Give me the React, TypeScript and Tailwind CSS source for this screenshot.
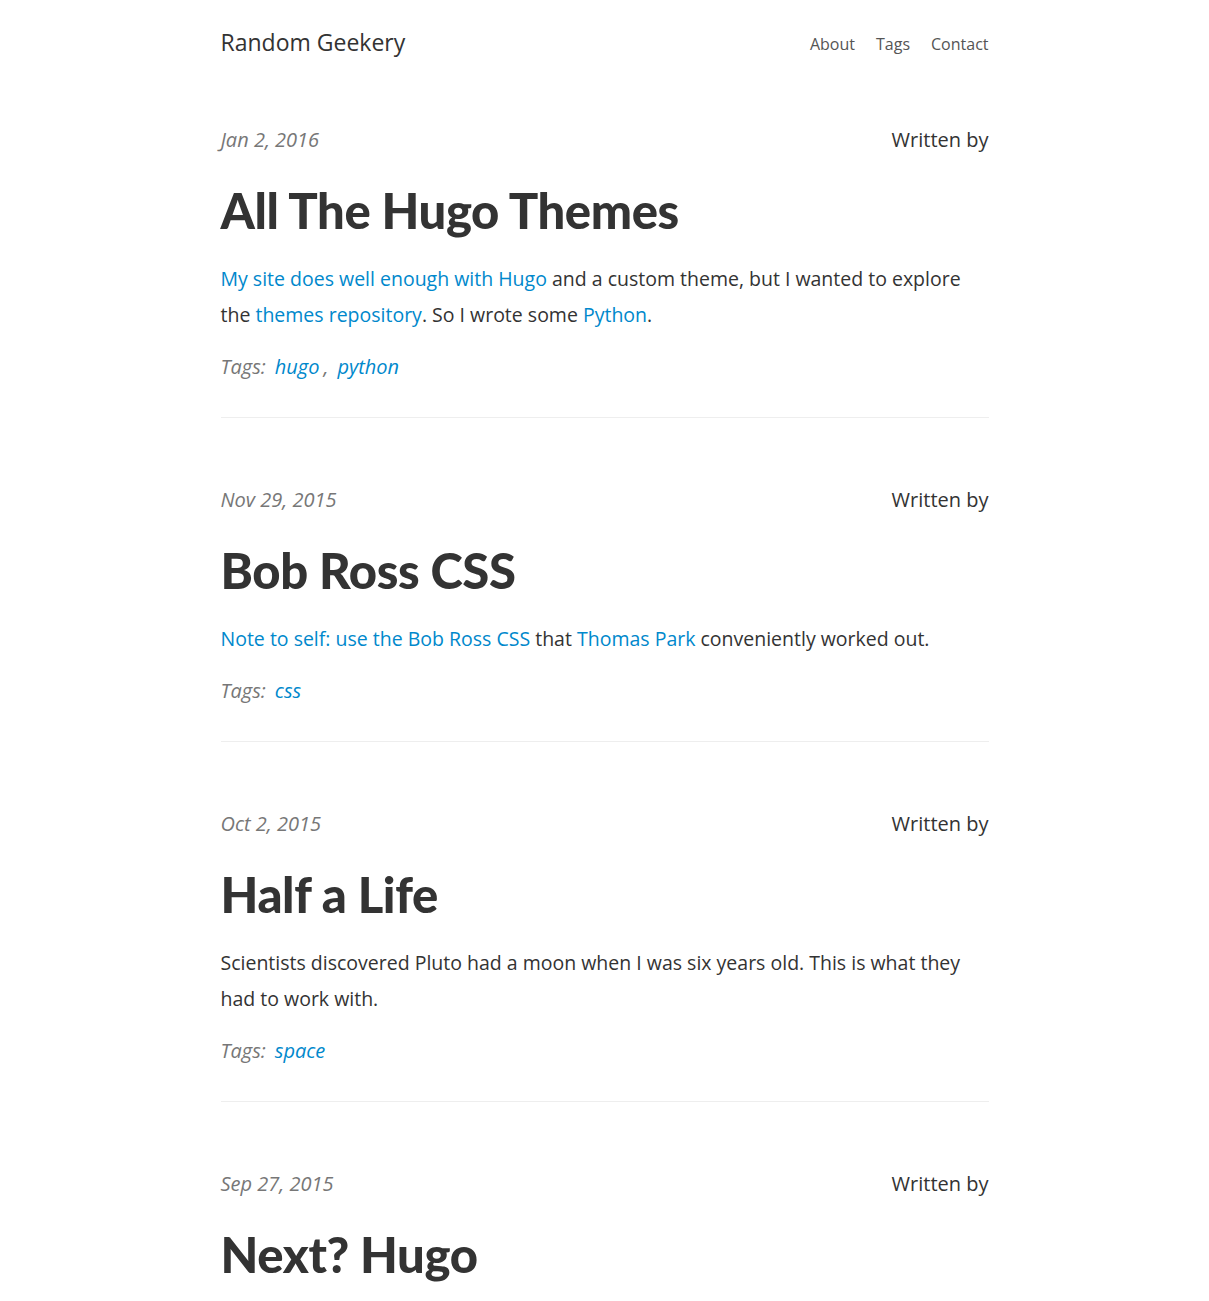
import React from "react";

const A = ({ children }: { children: React.ReactNode }) => (
  <a href="#" className="text-[#0088cc]">{children}</a>
);

type Post = {
  date: string;
  title: string;
  body: React.ReactNode;
  tags: string[];
  last?: boolean;
};

const posts: Post[] = [
  {
    date: "Jan 2, 2016",
    title: "All The Hugo Themes",
    body: (
      <>
        <A>My site does well enough with Hugo</A> and a custom theme, but I wanted to explore the{" "}
        <A>themes repository</A>. So I wrote some <A>Python</A>.
      </>
    ),
    tags: ["hugo", "python"],
  },
  {
    date: "Nov 29, 2015",
    title: "Bob Ross CSS",
    body: (
      <>
        <A>Note to self: use the Bob Ross CSS</A> that <A>Thomas Park</A> conveniently worked out.
      </>
    ),
    tags: ["css"],
  },
  {
    date: "Oct 2, 2015",
    title: "Half a Life",
    body: (
      <>Scientists discovered Pluto had a moon when I was six years old. This is what they had to work with.</>
    ),
    tags: ["space"],
  },
  {
    date: "Sep 27, 2015",
    title: "Next? Hugo",
    body: null,
    tags: [],
    last: true,
  },
];

export default function App() {
  const body = { fontFamily: '"Open Sans", "Noto Sans", sans-serif' };
  const head = { fontFamily: 'Lato, "Open Sans", sans-serif' };
  return (
    <div className="min-h-[1301px] bg-white text-[#333]" style={body}>
      <div className="mx-auto w-[768px]">
        <header className="flex items-center justify-between pt-[24px]">
          <a href="#" className="text-[23px] leading-[32px] text-[#333]">Random Geekery</a>
          <nav className="flex gap-[21px] text-[16px] leading-[32px] text-[#555] pt-[4px]">
            <a href="#">About</a>
            <a href="#">Tags</a>
            <a href="#">Contact</a>
          </nav>
        </header>
        <main className="pt-[65px]">
          {posts.map((p, i) => (
            <article key={i}>
              <div className="flex items-center justify-between text-[20px] leading-[30px]">
                <span className="italic text-[#777]">{p.date}</span>
                <span className="text-[#333]">Written by</span>
              </div>
              <h1
                className="mt-[27px] text-[49px] leading-[56px] font-black tracking-[-0.4px] text-[#333]"
                style={head}
              >
                {p.title}
              </h1>
              {!p.last && (
                <>
                  <p className="mt-[23px] text-[19.5px] leading-[36px]">{p.body}</p>
                  <div className="mt-[19px] text-[20px] leading-[30px] italic text-[#777]">
                    Tags:
                    {p.tags.map((t, j) => (
                      <span key={t} className="ml-[9px]">
                        <A>{t}</A>
                        {j < p.tags.length - 1 ? <span className="ml-[4px] text-[#777]">,</span> : null}
                      </span>
                    ))}
                  </div>
                  <hr className="mt-[35px] mb-[67px] border-0 border-t border-[#eee]" />
                </>
              )}
            </article>
          ))}
        </main>
      </div>
    </div>
  );
}
